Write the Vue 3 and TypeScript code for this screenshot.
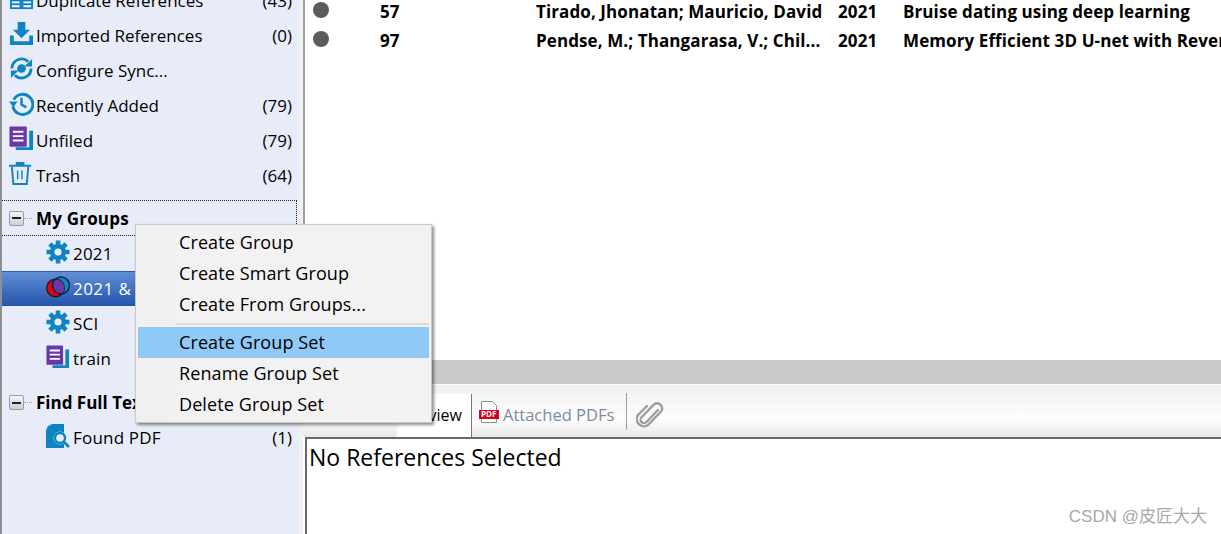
<script setup lang="ts">
type Row = { icon: string; label: string; count?: string }

const topRows: Row[] = [
  { icon: 'dup', label: 'Duplicate References', count: '(43)' },
  { icon: 'import', label: 'Imported References', count: '(0)' },
  { icon: 'sync', label: 'Configure Sync...' },
  { icon: 'recent', label: 'Recently Added', count: '(79)' },
  { icon: 'unfiled', label: 'Unfiled', count: '(79)' },
  { icon: 'trash', label: 'Trash', count: '(64)' },
]

const refs = [
  { rec: '57', authors: 'Tirado, Jhonatan; Mauricio, David', year: '2021', title: 'Bruise dating using deep learning' },
  { rec: '97', authors: 'Pendse, M.; Thangarasa, V.; Chil...', year: '2021', title: 'Memory Efficient 3D U-net with Reversible' },
]

const menuTop = ['Create Group', 'Create Smart Group', 'Create From Groups...']
const menuBottom = ['Create Group Set', 'Rename Group Set', 'Delete Group Set']
</script>

<template>
  <div class="app">
    <aside class="sidebar">
      <div class="top-list">
        <div v-for="r in topRows" :key="r.label" class="row">
          <svg class="ico" viewBox="0 0 26 26">
            <template v-if="r.icon === 'dup'">
              <path d="M1 14h24v10H1z" fill="#0e84c0" />
              <path d="M3 16h8v2H3zM15 16h8v2h-8zM3 20h8v2H3zM15 20h8v2h-8z" fill="#fff" />
            </template>
            <template v-else-if="r.icon === 'import'">
              <path d="M9 1h8v8h5l-9 9-9-9h5z" fill="#0e84c0" />
              <path d="M1 15h4v6h16v-6h4v10H1z" fill="#0e84c0" />
            </template>
            <template v-else-if="r.icon === 'sync'">
              <path d="M3 13a10 10 0 0 1 17-7" fill="none" stroke="#0e84c0" stroke-width="3" />
              <path d="M23 13a10 10 0 0 1-17 7" fill="none" stroke="#0e84c0" stroke-width="3" />
              <path d="M24 3v8h-8zM2 23v-8h8z" fill="#0e84c0" />
              <circle cx="13" cy="13" r="4.500" fill="#0e84c0" />
            </template>
            <template v-else-if="r.icon === 'recent'">
              <path d="M5 9a10.500 10.500 0 1 1-1 7" fill="none" stroke="#0e84c0" stroke-width="3" />
              <path d="M0 11h9l-4.500 6z" fill="#0e84c0" />
              <path d="M13 7v7l5 3" fill="none" stroke="#0e84c0" stroke-width="2.500" />
            </template>
            <template v-else-if="r.icon === 'unfiled'">
              <path d="M21 5h4v19a1 1 0 0 1-1 1H7v-3h14z" fill="#0e84c0" />
              <rect x="0.500" y="0.500" width="18" height="21" rx="1" fill="#6a36a8" />
              <path d="M4 5h11v2H4zM4 9.500h11v2H4zM4 14h11v2H4z" fill="#fff" />
            </template>
            <template v-else>
              <path d="M0 4h23v2H0zM7 4V1h9v3" fill="#0e84c0" />
              <path d="M3 6l1.500 18h14L20 6" fill="none" stroke="#0e84c0" stroke-width="2" />
              <path d="M9 10v9M13.500 10v9" stroke="#0e84c0" stroke-width="1.500" />
            </template>
          </svg>
          <span class="label">{{ r.label }}</span>
          <span v-if="r.count" class="count">{{ r.count }}</span>
        </div>
      </div>

      <div class="group-head focused">
        <span class="expander"><i></i></span>
        <span class="dots"></span>
        <b>My Groups</b>
      </div>
      <div class="row sub">
        <svg class="ico" viewBox="0 0 24 24">
          <circle cx="12" cy="12" r="8" fill="#0e84c0" />
          <path d="M12 .5v23M.5 12h23M3.900 3.900l16.200 16.200M20.100 3.900 3.900 20.100" stroke="#0e84c0" stroke-width="4.600" />
          <circle cx="12" cy="12" r="3.600" fill="#e8ecf8" />
        </svg>
        <span class="label">2021</span>
      </div>
      <div class="row sub selected">
        <svg class="ico" viewBox="0 0 24 24">
          <defs>
            <clipPath id="venn-left"><circle cx="9.500" cy="13" r="8.800" /></clipPath>
          </defs>
          <circle cx="15" cy="10.500" r="8.500" fill="#0e84c0" stroke="#10222f" stroke-width="1.400" />
          <circle cx="9.500" cy="13" r="8.800" fill="#e8000b" stroke="#10222f" stroke-width="1.400" />
          <circle cx="15" cy="10.500" r="8.500" fill="#6a36a8" stroke="#10222f" stroke-width="1.400" clip-path="url(#venn-left)" />
        </svg>
        <span class="label">2021 &amp; SCI</span>
      </div>
      <div class="row sub">
        <svg class="ico" viewBox="0 0 24 24">
          <circle cx="12" cy="12" r="8" fill="#0e84c0" />
          <path d="M12 .5v23M.5 12h23M3.900 3.900l16.200 16.200M20.100 3.900 3.900 20.100" stroke="#0e84c0" stroke-width="4.600" />
          <circle cx="12" cy="12" r="3.600" fill="#e8ecf8" />
        </svg>
        <span class="label">SCI</span>
      </div>
      <div class="row sub">
        <svg class="ico" viewBox="0 0 26 26">
          <path d="M21 5h4v19a1 1 0 0 1-1 1H7v-3h14z" fill="#0e84c0" />
          <rect x="0.500" y="0.500" width="18" height="21" rx="1" fill="#6a36a8" />
          <path d="M4 5h11v2H4zM4 9.500h11v2H4zM4 14h11v2H4z" fill="#fff" />
        </svg>
        <span class="label">train</span>
      </div>

      <div class="group-head second">
        <span class="expander"><i></i></span>
        <span class="dots"></span>
        <b>Find Full Text</b>
      </div>
      <div class="row sub">
        <svg class="ico" viewBox="0 0 24 24">
          <path d="M6 0h12v24H0V6z" fill="#0e84c0" />
          <path d="M4.500 0v4.500H0z" fill="#0e84c0" />
          <circle cx="14" cy="14" r="6.500" fill="#e8ecf8" />
          <circle cx="14" cy="14" r="5" fill="none" stroke="#0e84c0" stroke-width="2.400" />
          <path d="M18 18l5 5" stroke="#0e84c0" stroke-width="2.600" />
        </svg>
        <span class="label">Found PDF</span>
        <span class="count">(1)</span>
      </div>
    </aside>

    <div class="splitter"></div>

    <main class="main">
      <section class="list">
        <div v-for="r in refs" :key="r.rec" class="ref">
          <span class="dot-col"><span class="dot"></span></span>
          <span class="rec">{{ r.rec }}</span>
          <span class="authors">{{ r.authors }}</span>
          <span class="year">{{ r.year }}</span>
          <span class="title">{{ r.title }}</span>
        </div>
      </section>

      <div class="hbar"></div>

      <div class="tabs">
        <div class="tab-spacer"></div>
        <div class="tab active">Preview</div>
        <div class="tab pdfs">
          <svg class="pdf-ico" viewBox="0 0 20 22">
            <path d="M2.500 .5h11l4 4v17h-15z" fill="#fff" stroke="#8d8d8d" />
            <path d="M0 9h20v9H0z" fill="#d9001b" />
          </svg>
          <span class="pdf-tag">PDF</span>
          <span>Attached PDFs</span>
        </div>
        <div class="clip">
          <svg viewBox="0 0 28 28" width="28" height="28">
            <path d="M22 9 10.500 21a3.400 3.400 0 0 1-5-4.700L18 3.500a5 5 0 0 1 7 7L12 24a7.200 7.200 0 0 1-10-10L11 5" fill="none" stroke="#9e9e9e" stroke-width="2.400" stroke-linecap="round" />
          </svg>
        </div>
      </div>

      <div class="preview">No References Selected</div>
    </main>

    <div class="menu">
      <div class="menu-group">
        <div v-for="m in menuTop" :key="m" class="menu-item">{{ m }}</div>
      </div>
      <div class="menu-sep"></div>
      <div
        v-for="(m, i) in menuBottom"
        :key="m"
        class="menu-item"
        :class="{ hot: i === 0 }"
      >
        {{ m }}
      </div>
    </div>

    <div class="watermark">CSDN @皮匠大大</div>
  </div>
</template>

<style>
html,
body {
  margin: 0;
  overflow: hidden;
}
</style>

<style scoped>
.app {
  position: relative;
  display: flex;
  width: 1221px;
  height: 534px;
  overflow: hidden;
  background: #fff;
  color: #000;
  font-family: "Open Sans", "Noto Sans CJK SC", sans-serif;
  font-size: 17px;
}

.sidebar {
  width: 298px;
  flex: none;
  box-sizing: border-box;
  border-left: 2px solid #8f8f8f;
  background: #e8ecf8;
}

.top-list {
  margin-top: -17px;
  padding-bottom: 7px;
}

.row {
  display: flex;
  align-items: center;
  height: 35px;
  padding-left: 7px;
  padding-right: 6px;
  box-sizing: border-box;
}

.ico {
  width: 25px;
  height: 25px;
  flex: none;
  margin-right: 2px;
  margin-top: -4px;
}

.label {
  flex: 1;
  white-space: nowrap;
}

.sub {
  padding-left: 44px;
}

.sub .ico {
  width: 24px;
  height: 24px;
  margin-right: 3px;
}

.sub .label {
  letter-spacing: 0.2px;
}

.selected {
  background: linear-gradient(#6290d6, #2454ad);
  box-shadow: inset 0 1px 0 #2b5cb5;
  color: #fff;
}

.sub.selected .label {
  letter-spacing: 0.45px;
}

.group-head {
  display: flex;
  align-items: center;
  height: 35px;
  margin-right: 1px;
  padding-left: 7px;
  box-sizing: border-box;
}

.focused {
  height: 36px;
  border: 1px dotted #222;
  border-left: 0;
}

.second {
  margin-top: 9px;
}

.expander {
  display: flex;
  align-items: center;
  justify-content: center;
  width: 15px;
  height: 15px;
  box-sizing: border-box;
  border: 1px solid #8aa0b8;
  border-radius: 2px;
  background: linear-gradient(#f5f5f5, #cfcfcf);
}

.expander i {
  width: 9px;
  height: 2px;
  background: #222;
}

.dots {
  width: 8px;
  margin: 0 4px 0 0;
  border-top: 1px dotted #9ab;
}

.group-head b {
  font-weight: 700;
  white-space: nowrap;
}

.focused b {
  letter-spacing: 0.2px;
}

.splitter {
  width: 5px;
  flex: none;
  background: #f0f0f0;
}

.main {
  flex: 1;
  min-width: 0;
  display: flex;
  flex-direction: column;
}

.list {
  height: 360px;
  flex: none;
  box-sizing: border-box;
  border-left: 2px solid #a0a0a0;
  overflow: hidden;
}

.ref {
  display: flex;
  align-items: center;
  height: 29px;
  white-space: nowrap;
  font-weight: 700;
  font-size: 17px;
  letter-spacing: 0.1px;
  position: relative;
  top: -3px;
}

.dot-col {
  width: 75px;
  padding-left: 8px;
  box-sizing: border-box;
  flex: none;
}

.dot {
  display: block;
  width: 16px;
  height: 16px;
  margin-top: -3px;
  border-radius: 50%;
  background: #5c5c5c;
}

.rec {
  width: 156px;
  flex: none;
}

.authors {
  width: 302px;
  flex: none;
}

.year {
  width: 65px;
  flex: none;
}

.hbar {
  height: 25px;
  flex: none;
  box-sizing: border-box;
  background: #cbcbcb;
  border-bottom: 1px solid #fff;
}

.tabs {
  display: flex;
  height: 52px;
  flex: none;
  box-sizing: border-box;
  padding-top: 9px;
  background: linear-gradient(#f0f0f0, #fdfdfd 65%, #e8e8e8);
}

.tab-spacer {
  width: 94px;
  flex: none;
}

.tab {
  display: flex;
  align-items: center;
  height: 100%;
  padding-bottom: 2px;
  box-sizing: border-box;
  white-space: nowrap;
}

.active {
  width: 75px;
  justify-content: flex-end;
  padding-right: 9px;
  background: #fff;
  border-right: 1px solid #777;
  font-size: 16px;
}

.pdfs {
  position: relative;
  width: 154px;
  padding-left: 31px;
  color: #7a8ba0;
  font-size: 16.500px;
}

.pdf-ico {
  position: absolute;
  left: 7px;
  top: 7px;
  width: 20px;
  height: 22px;
}

.pdf-tag {
  position: absolute;
  left: 9px;
  top: 15px;
  font-size: 8px;
  line-height: 10px;
  font-weight: 700;
  color: #fff;
}

.clip {
  box-sizing: border-box;
  height: 37px;
  margin-top: -1px;
  border-left: 1px solid #a0a0a0;
  padding: 8px 0 0 9px;
}

.preview {
  flex: 1;
  box-sizing: border-box;
  margin-left: 2px;
  border-left: 2px solid #696969;
  border-top: 2px solid #696969;
  padding: 2px 0 0 2px;
  font-size: 23px;
  white-space: nowrap;
}

.menu {
  position: absolute;
  left: 135px;
  top: 224px;
  width: 297px;
  height: 199px;
  box-sizing: border-box;
  border: 1px solid #c8c8c8;
  background: linear-gradient(90deg, #f0f0f0 38px, #f2f2f2 38px);
  box-shadow: 2px 2px 3px rgba(0, 0, 0, 0.45);
  padding: 2px;
}

.menu-item {
  height: 31px;
  line-height: 30px;
  padding-left: 41px;
  font-size: 18px;
  letter-spacing: 0.1px;
  white-space: nowrap;
}

.menu-sep {
  height: 2px;
  margin: 3px 0 2px 38px;
  background: #dcdcdc;
}

.hot {
  background: #90c8f6;
}

.watermark {
  position: absolute;
  right: 14px;
  bottom: 7px;
  color: #a8a8a8;
  font-size: 17px;
  font-family: "Liberation Sans", "Noto Sans CJK SC", sans-serif;
}
</style>
